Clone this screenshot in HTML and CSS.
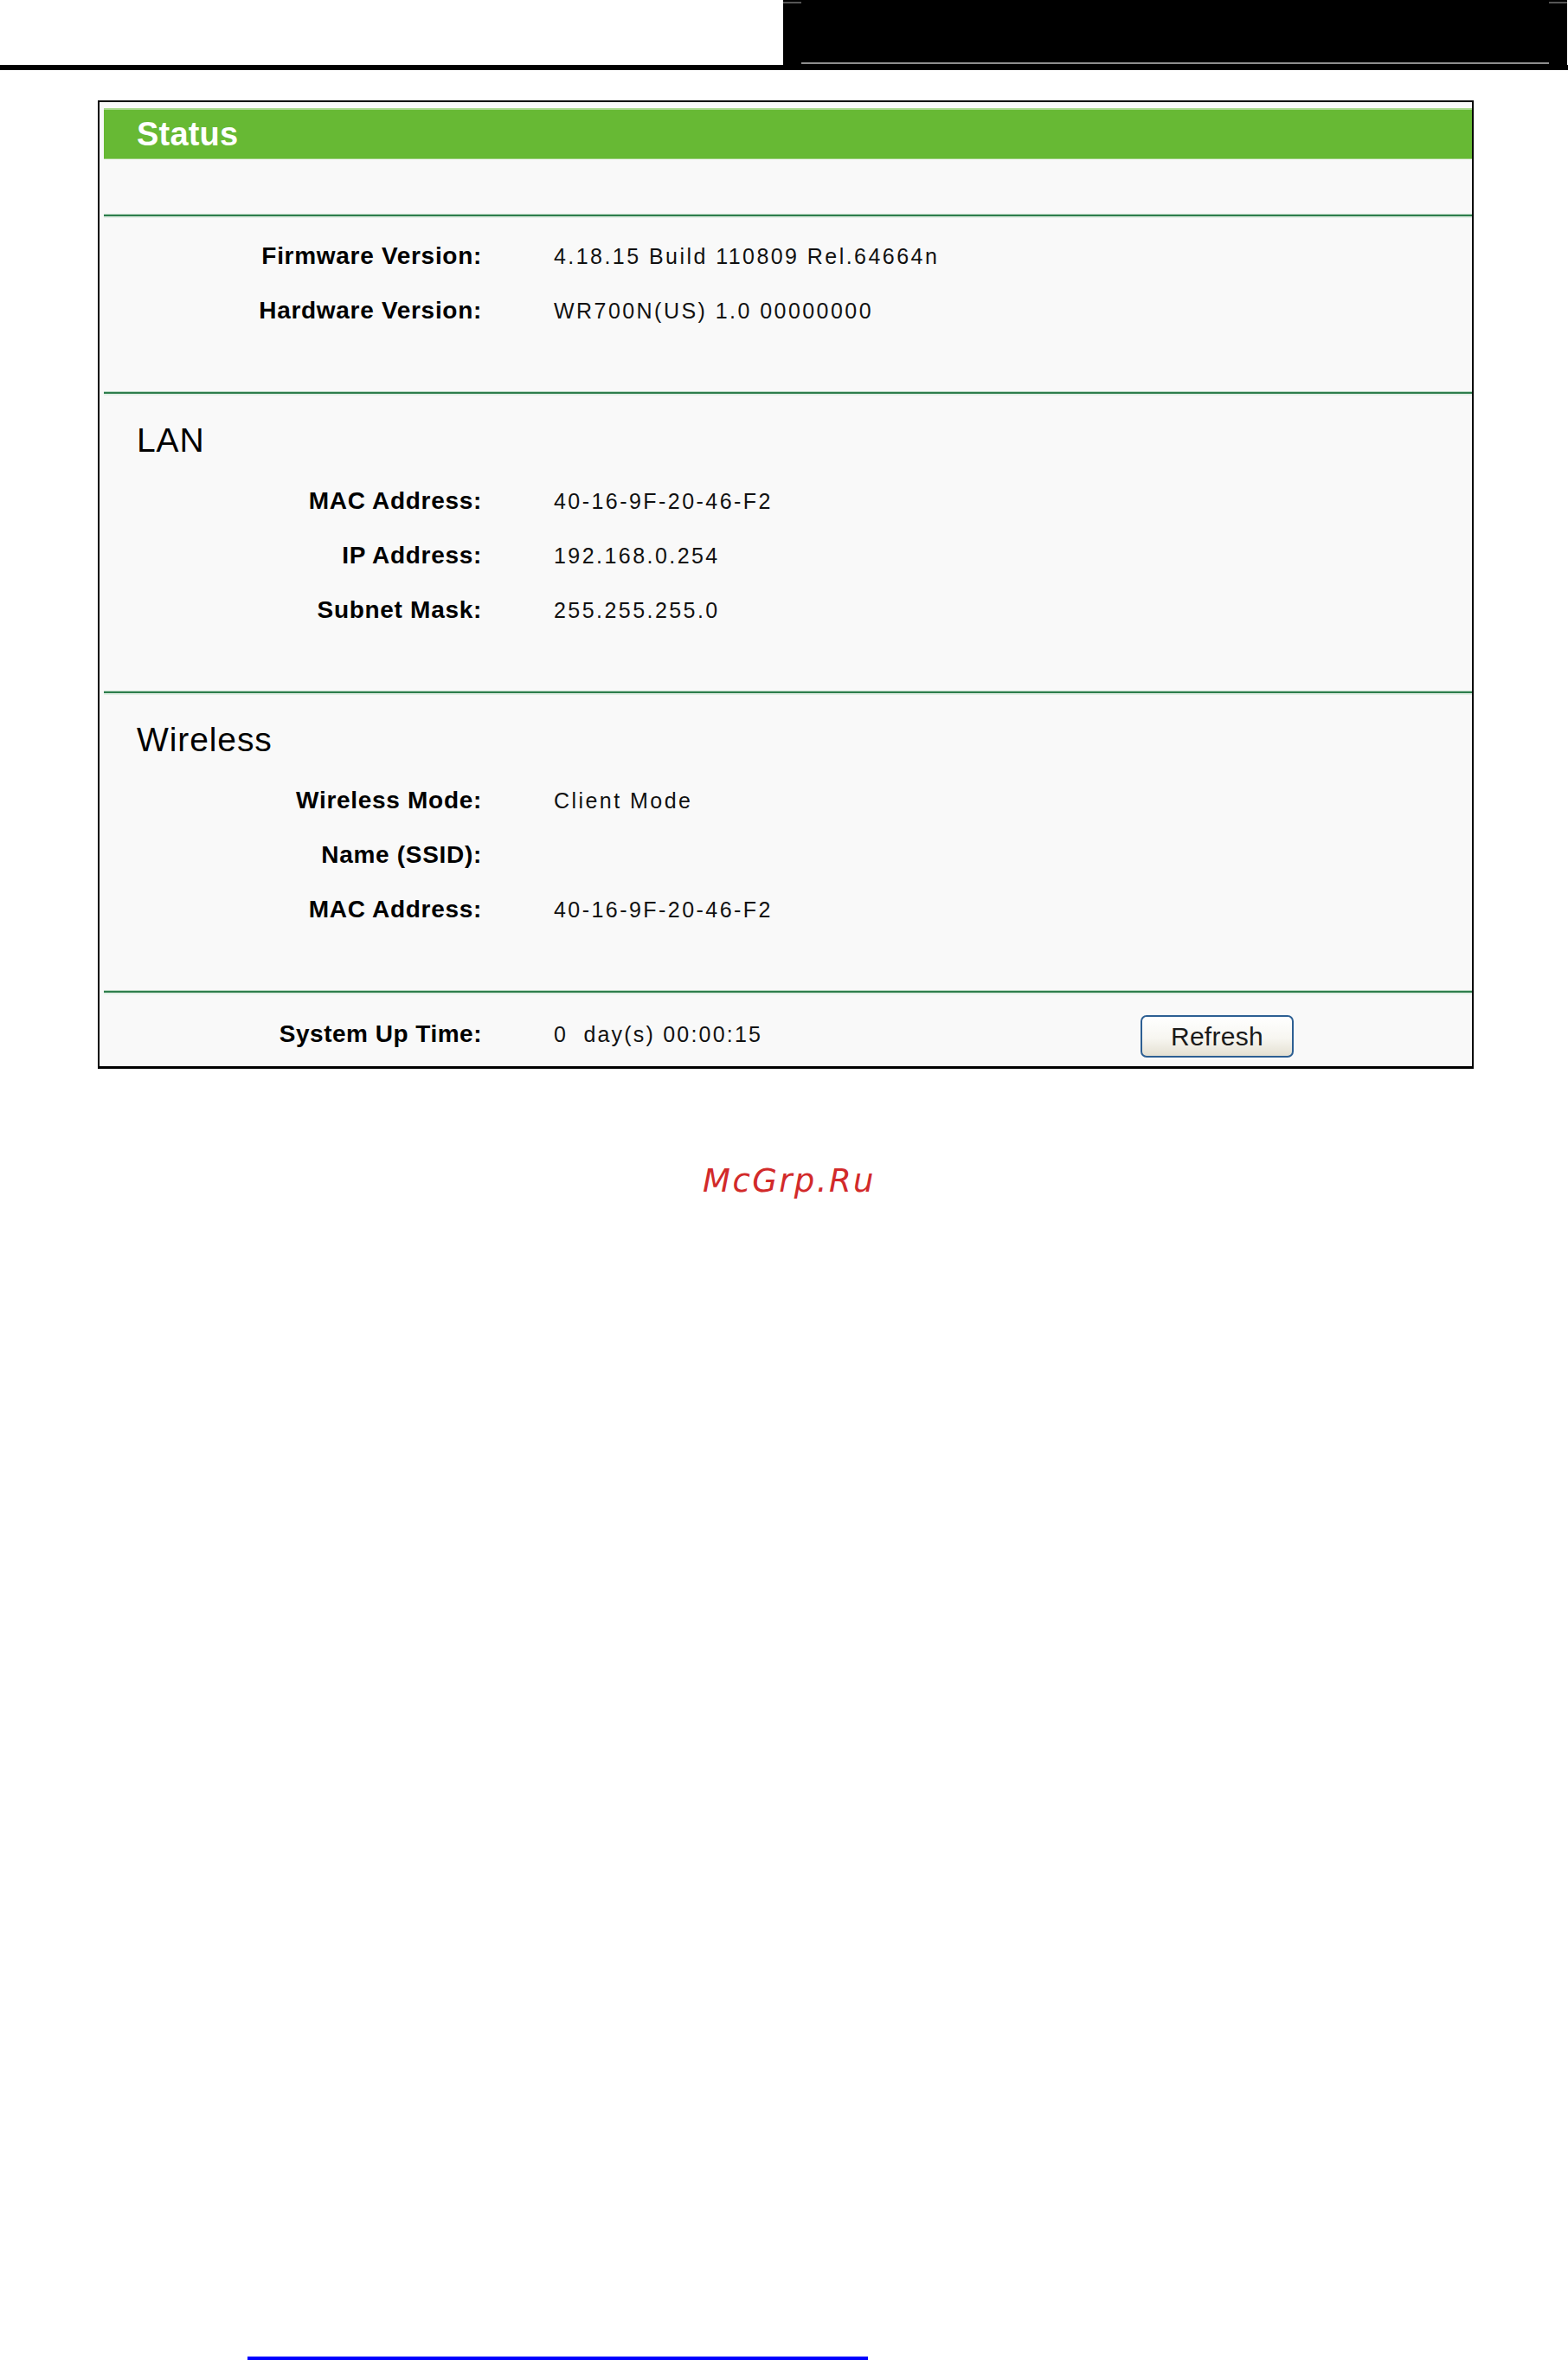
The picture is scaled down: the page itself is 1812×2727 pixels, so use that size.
FILE: index.html
```html
<!DOCTYPE html>
<html lang="en">
<head>
<meta charset="utf-8">
<title>Status</title>
<link rel="stylesheet" href="styles.css">
</head>
<body>
<div class="page">
  <div class="top">
    <div class="top-white"></div>
    <div class="blk">
      <div class="blk-marks"><span></span><span></span></div>
      <div class="blk-line"></div>
    </div>
  </div>
  <div class="rule"></div>

  <div class="panel">
    <div class="title">Status</div>
    <div class="blank"></div>
    <div class="sep"></div>

    <div class="sec first">
      <div class="grid">
        <div class="lbl">Firmware Version:</div><div class="val">4.18.15 Build 110809 Rel.64664n</div>
        <div class="lbl">Hardware Version:</div><div class="val">WR700N(US) 1.0 00000000</div>
      </div>
    </div>
    <div class="sep"></div>

    <div class="sec">
      <div class="head">LAN</div>
      <div class="grid">
        <div class="lbl">MAC Address:</div><div class="val">40-16-9F-20-46-F2</div>
        <div class="lbl">IP Address:</div><div class="val">192.168.0.254</div>
        <div class="lbl">Subnet Mask:</div><div class="val">255.255.255.0</div>
      </div>
    </div>
    <div class="sep"></div>

    <div class="sec">
      <div class="head">Wireless</div>
      <div class="grid">
        <div class="lbl">Wireless Mode:</div><div class="val">Client Mode</div>
        <div class="lbl">Name (SSID):</div><div class="val"></div>
        <div class="lbl">MAC Address:</div><div class="val">40-16-9F-20-46-F2</div>
      </div>
    </div>
    <div class="sep"></div>

    <div class="uptime">
      <div class="lbl">System Up Time:</div>
      <div class="val up-val">0&nbsp; day(s) 00:00:15</div>
      <button class="btn" type="button">Refresh</button>
    </div>
  </div>

  <div class="watermark">McGrp.Ru</div>
  <div class="link-line"></div>
</div>
</body>
</html>
```

FILE: styles.css
```css
* { box-sizing: border-box; }

html, body {
  margin: 0;
  padding: 0;
  background: #ffffff;
}

.page {
  width: 1812px;
  height: 2727px;
  overflow: hidden;
  font-family: "Liberation Sans", Arial, sans-serif;
  color: #000;
}

/* top black header */
.top {
  display: flex;
  height: 75px;
}
.top-white {
  width: 905px;
  background: #fff;
}
.blk {
  width: 906px;
  background: #000;
  display: flex;
  flex-direction: column;
  justify-content: space-between;
}
.blk-marks {
  display: flex;
  justify-content: space-between;
  height: 2px;
  margin-top: 2px;
}
.blk-marks span {
  display: block;
  width: 21px;
  height: 2px;
  background: #555;
}
.blk-line {
  height: 2px;
  margin: 0 21px 1px 21px;
  background: #8e8e8e;
}
.rule {
  height: 6px;
  background: #000;
}

/* status panel */
.panel {
  margin: 35px 0 0 113px;
  width: 1590px;
  border: 2px solid #000;
  border-bottom-width: 3px;
  background: #f9f9f9;
  padding: 7px 0 0 5px;
}

.title {
  height: 59px;
  background: #67b934;
  border-top: 2px solid #a6d889;
  border-bottom: 1px solid #9ccf7c;
  color: #fff;
  font-weight: bold;
  font-size: 38px;
  line-height: 56px;
  padding-left: 38px;
  letter-spacing: 0.2px;
}

.blank { height: 63px; }

.sep {
  height: 5px;
  border-top: 1px solid #bcdac5;
  border-bottom: 2px solid #e3efe6;
  background: #2e7e4d;
}

.sec {
  padding: 32px 0 62px 0;
}
.sec.first {
  padding-top: 12px;
}

.head {
  font-size: 39px;
  line-height: 39px;
  letter-spacing: 0.9px;
  padding-left: 38px;
  margin-bottom: 19px;
}

.grid {
  display: grid;
  grid-template-columns: 437px 1fr;
  column-gap: 83px;
  grid-auto-rows: 63px;
  align-items: baseline;
}

.lbl {
  text-align: right;
  font-weight: bold;
  font-size: 28px;
  line-height: 63px;
  letter-spacing: 0.7px;
  white-space: nowrap;
}

.val {
  font-size: 25px;
  line-height: 63px;
  letter-spacing: 2.45px;
  color: #111;
  white-space: nowrap;
}

.uptime {
  display: grid;
  grid-template-columns: 437px 761px 177px;
  height: 63px;
  align-items: baseline;
  margin: 14px 0 6px 0;
}
.uptime .lbl {
  letter-spacing: 0.5px;
}
.up-val {
  padding-left: 83px;
  letter-spacing: 2.2px;
}

.btn {
  align-self: center;
  margin-top: 4px;
  width: 177px;
  height: 49px;
  padding: 0;
  border: 2px solid #2d5f93;
  border-radius: 7px;
  background: linear-gradient(#ffffff 0%, #f7f6f1 55%, #e4e0d2 100%);
  font-family: "Liberation Sans", Arial, sans-serif;
  font-size: 30px;
  letter-spacing: 0.3px;
  color: #1a1a1a;
  line-height: 43px;
  text-align: center;
}

/* watermark */
.watermark {
  margin-top: 108px;
  text-align: center;
  padding-left: 12px;
  font-family: "DejaVu Sans", sans-serif;
  font-style: oblique;
  font-size: 37px;
  line-height: 43px;
  letter-spacing: 2.4px;
  color: #d22a2a;
}

.link-line {
  margin: 1337px 0 0 286px;
  width: 717px;
  height: 4px;
  background: #0000ff;
}
```
